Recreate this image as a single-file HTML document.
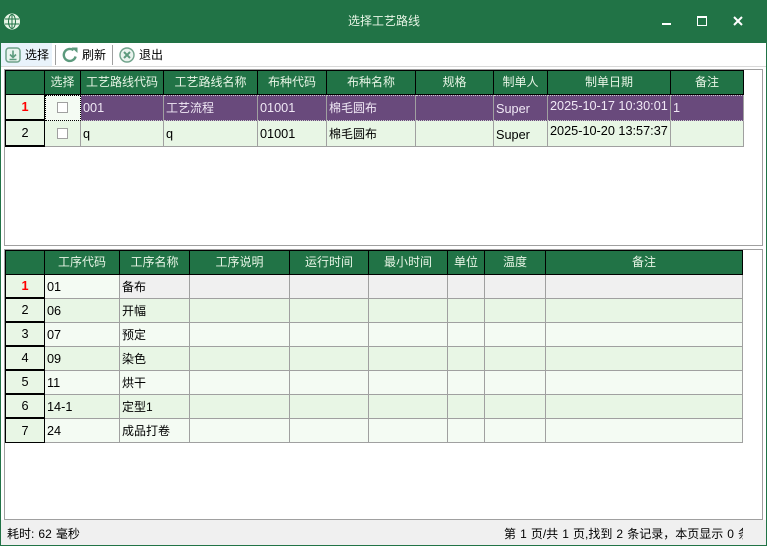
<!DOCTYPE html>
<html><head><meta charset="utf-8">
<style>
html,body{margin:0;padding:0}
body{width:767px;height:546px;position:relative;overflow:hidden;background:#fff;font:12px/16px "Liberation Sans","Noto Sans CJK SC",sans-serif;color:#000}
.a{position:absolute}
table{position:absolute;border-collapse:separate;border-spacing:0;table-layout:fixed}
td,th{box-sizing:border-box;padding:0 0 0 2px;border-right:1px solid #a0a0a0;border-bottom:1px solid #a0a0a0;font-weight:normal;white-space:nowrap;overflow:hidden;text-align:left;font-size:12px}
th{background:#217346;color:#e8f5e6;text-align:center;border-color:#000;border-top:1px solid #000;height:25px;padding:0 0 1px}
th:first-child,td.r{border-left:1px solid #000}
td.r{text-align:center;padding:0;border-color:#000;background:#e8f6e5;border-bottom-width:2px;font-size:12.7px}
td.s{color:#f00;font-weight:bold}
td.l{font-size:12.7px}
td.u{padding-top:2px}
tr.p td:not(.r):not(.c){background:#694a7c;color:#f0e8f5;border-top:1px dotted #ccc;border-bottom:1px dotted #ccc}
.t1 td{height:26px}
.t2 td{height:24px}
.o td:not(.r){background:#f4fbf3}
.e td:not(.r){background:#e8f6e5}
.sel td:not(.r){background:#f4fbf3}
.sel td.g{background:#f0f0f0}
td.c{padding:0;position:relative}
td.c i{display:block;width:9px;height:9px;border:1px solid #a0a0a0;background:#fff;margin:0 0 0 12px}
td.k{background:#f4fbf3;border:1px dotted #000}
td.k i{margin-left:11px;position:relative;top:-1px}
.st{word-spacing:.75px}
</style></head><body>
<div class="a" style="left:0;top:0;width:767px;height:43px;background:#217346"></div>
<div class="a" style="left:0;top:0;width:1px;height:546px;background:#217346"></div>
<div class="a" style="left:766px;top:0;width:1px;height:546px;background:#217346"></div>
<div class="a" style="left:0;top:545px;width:767px;height:1px;background:#217346"></div>
<svg class="a" style="left:4px;top:13px" width="16" height="17" viewBox="0 0 16 17" fill="none" stroke="#e8f5e6"><circle cx="8" cy="8.5" r="7.5" fill="#e8f5e6"/><g stroke="#217346" stroke-width="1"><ellipse cx="8" cy="8.5" rx="3.5" ry="7"/><path d="M8 1v15M1 6h14M1 11h14"/></g></svg>
<div class="a" style="left:348px;top:13px;width:72px;color:#e8f5e6;white-space:nowrap">选择工艺路线</div>
<div class="a" style="left:662px;top:23px;width:9px;height:2px;background:#fff"></div>
<div class="a" style="left:697px;top:16px;width:8px;height:7px;border:1px solid #fff;border-top-width:2px"></div>
<svg class="a" style="left:732px;top:15px" width="12" height="12" viewBox="0 0 12 12"><path d="M2 2l8 8M10 2l-8 8" stroke="#fff" stroke-width="2"/></svg>

<div class="a" style="left:1px;top:43px;width:51px;height:23px;background:#e9f3fb"></div>
<div class="a" style="left:1px;top:66px;width:765px;height:1px;background:#d9d9d9"></div>
<svg class="a" style="left:5px;top:47px" width="16" height="16" viewBox="0 0 16 16" fill="none"><rect x="1" y="1" width="14" height="14" rx="3" fill="#e9f3ee" stroke="#6fa28a" stroke-width="1.5"/><path d="M8 3.5v6M5 7.5l3 3 3-3M4.5 12.5h7" stroke="#5c9a7d" stroke-width="1.6"/></svg>
<div class="a" style="left:25px;top:47px">选择</div>
<div class="a" style="left:55px;top:45px;width:1px;height:20px;background:#a0a0a0"></div>
<svg class="a" style="left:62px;top:47px" width="16" height="16" viewBox="0 0 16 16" fill="none"><path d="M13.6 9.5A6 6 0 1 1 11.5 3.2" stroke="#5c9a7d" stroke-width="2.4"/><path d="M9.5 .5h6v5.5z" fill="#5c9a7d"/></svg>
<div class="a" style="left:82px;top:47px">刷新</div>
<div class="a" style="left:112px;top:45px;width:1px;height:20px;background:#a0a0a0"></div>
<svg class="a" style="left:119px;top:47px" width="16" height="16" viewBox="0 0 16 16" fill="none"><circle cx="8" cy="8" r="7" fill="#e9f3ee" stroke="#6fa28a" stroke-width="1.4"/><path d="M5 5l6 6M11 5l-6 6" stroke="#5c9a7d" stroke-width="2"/></svg>
<div class="a" style="left:139px;top:47px">退出</div>

<div class="a" style="left:4px;top:69px;width:757px;height:175px;border:1px solid #a0a0a0"></div>
<div class="a" style="left:4px;top:249px;width:757px;height:269px;border:1px solid #a0a0a0"></div>

<table class="t1" style="left:5px;top:70px;width:739px">
<colgroup><col style="width:40px"><col style="width:36px"><col style="width:83px"><col style="width:94px"><col style="width:69px"><col style="width:89px"><col style="width:78px"><col style="width:54px"><col style="width:123px"><col style="width:73px"></colgroup>
<tr><th></th><th>选择</th><th>工艺路线代码</th><th>工艺路线名称</th><th>布种代码</th><th>布种名称</th><th>规格</th><th>制单人</th><th>制单日期</th><th>备注</th></tr>
<tr class="p"><td class="r s">1</td><td class="c k"><i></i></td><td class="l">001</td><td>工艺流程</td><td class="l">01001</td><td>棉毛圆布</td><td></td><td class="l u">Super</td><td class="l" style="vertical-align:top;line-height:20px">2025-10-17 10:30:01</td><td class="l">1</td></tr>
<tr class="e"><td class="r">2</td><td class="c"><i></i></td><td class="l">q</td><td class="l">q</td><td class="l">01001</td><td>棉毛圆布</td><td></td><td class="l u">Super</td><td class="l" style="vertical-align:top;line-height:20px">2025-10-20 13:57:37</td><td></td></tr>
</table>

<table class="t2" style="left:5px;top:250px;width:738px">
<colgroup><col style="width:40px"><col style="width:75px"><col style="width:70px"><col style="width:100px"><col style="width:79px"><col style="width:79px"><col style="width:37px"><col style="width:61px"><col style="width:197px"></colgroup>
<tr><th></th><th>工序代码</th><th>工序名称</th><th>工序说明</th><th>运行时间</th><th>最小时间</th><th>单位</th><th>温度</th><th>备注</th></tr>
<tr class="sel"><td class="r s">1</td><td class="l">01</td><td class="g">备布</td><td class="g"></td><td class="g"></td><td class="g"></td><td class="g"></td><td class="g"></td><td class="g"></td></tr>
<tr class="e"><td class="r">2</td><td class="l">06</td><td>开幅</td><td></td><td></td><td></td><td></td><td></td><td></td></tr>
<tr class="o"><td class="r">3</td><td class="l">07</td><td>预定</td><td></td><td></td><td></td><td></td><td></td><td></td></tr>
<tr class="e"><td class="r">4</td><td class="l">09</td><td>染色</td><td></td><td></td><td></td><td></td><td></td><td></td></tr>
<tr class="o"><td class="r">5</td><td class="l">11</td><td>烘干</td><td></td><td></td><td></td><td></td><td></td><td></td></tr>
<tr class="e"><td class="r">6</td><td class="l">14-1</td><td>定型1</td><td></td><td></td><td></td><td></td><td></td><td></td></tr>
<tr class="o"><td class="r" style="border-bottom-width:1px">7</td><td class="l">24</td><td>成品打卷</td><td></td><td></td><td></td><td></td><td></td><td></td></tr>
</table>

<div class="a" style="left:1px;top:520px;width:765px;height:25px;background:#f0f0f0"></div>
<div class="a st" style="left:7px;top:526px;white-space:nowrap">耗时: 62 毫秒</div>
<div class="a st" style="left:504px;top:526px;width:239px;overflow:hidden;white-space:nowrap">第 1 页/共 1 页,找到 2 条记录，本页显示 0 条</div>
</body></html>
